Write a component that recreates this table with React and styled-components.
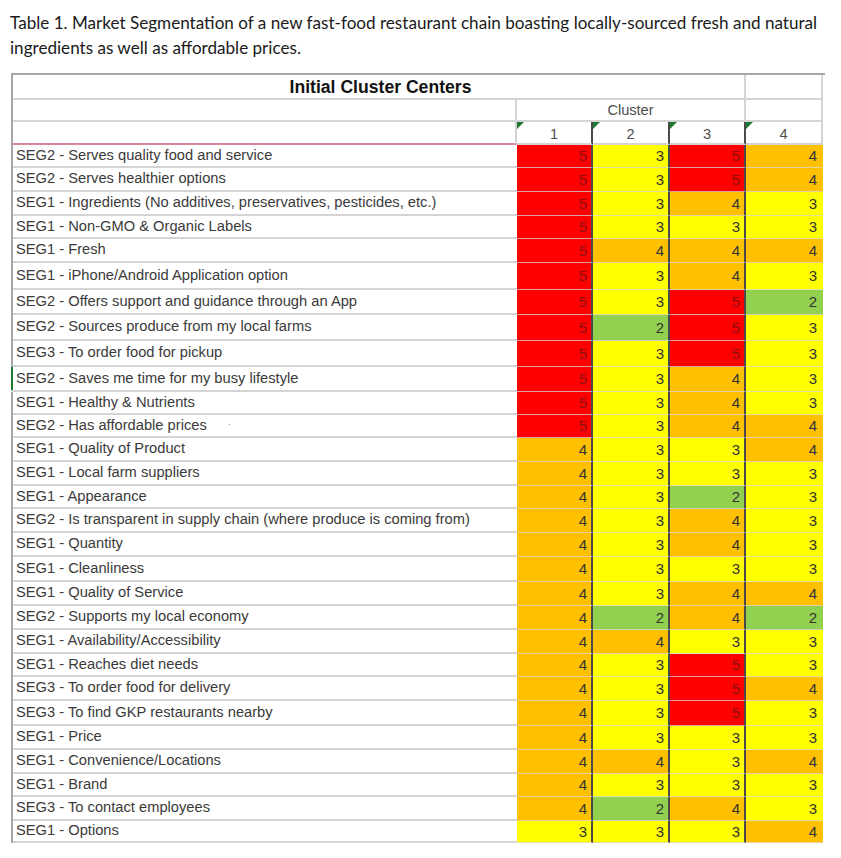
import React from "react";
import styled, { createGlobalStyle } from "styled-components";

const GlobalStyle = createGlobalStyle`
  body {
    margin: 0;
    background: #fff;
  }
`;

const COLS = "504px 76px 77px 76px 77px";

const FILLS = {
  5: "#ff0000",
  4: "#ffc000",
  3: "#ffff00",
  2: "#92d050",
};

const ROWS = [
  ["SEG2 - Serves quality food and service", [5, 3, 5, 4], 23],
  ["SEG2 - Serves healthier options", [5, 3, 5, 4], 24],
  ["SEG1 - Ingredients (No additives, preservatives, pesticides, etc.)", [5, 3, 4, 3], 24],
  ["SEG1 - Non-GMO & Organic Labels", [5, 3, 3, 3], 23],
  ["SEG1 - Fresh", [5, 4, 4, 4], 24],
  ["SEG1 - iPhone/Android Application option", [5, 3, 4, 3], 27],
  ["SEG2 - Offers support and guidance through an App", [5, 3, 5, 2], 25],
  ["SEG2 - Sources produce from my local farms", [5, 2, 5, 3], 26],
  ["SEG3 - To order food for pickup", [5, 3, 5, 3], 26],
  ["SEG2 - Saves me time for my busy lifestyle", [5, 3, 4, 3], 25, true],
  ["SEG1 - Healthy & Nutrients", [5, 3, 4, 3], 23],
  ["SEG2 - Has affordable prices", [5, 3, 4, 4], 23, false, true],
  ["SEG1 - Quality of Product", [4, 3, 3, 4], 24],
  ["SEG1 - Local farm suppliers", [4, 3, 3, 3], 24],
  ["SEG1 - Appearance", [4, 3, 2, 3], 23],
  ["SEG2 - Is transparent in supply chain (where produce is coming from)", [4, 3, 4, 3], 24],
  ["SEG1 - Quantity", [4, 3, 4, 3], 24],
  ["SEG1 - Cleanliness", [4, 3, 3, 3], 25],
  ["SEG1 - Quality of Service", [4, 3, 4, 4], 24],
  ["SEG2 - Supports my local economy", [4, 2, 4, 2], 24],
  ["SEG1 - Availability/Accessibility", [4, 4, 3, 3], 24],
  ["SEG1 - Reaches diet needs", [4, 3, 5, 3], 23],
  ["SEG3 - To order food for delivery", [4, 3, 5, 4], 24],
  ["SEG3 - To find GKP restaurants nearby", [4, 3, 5, 3], 25],
  ["SEG1 - Price", [4, 3, 3, 3], 24],
  ["SEG1 - Convenience/Locations", [4, 4, 3, 4], 24],
  ["SEG1 - Brand", [4, 3, 3, 3], 23],
  ["SEG3 - To contact employees", [4, 2, 4, 3], 24],
  ["SEG1 - Options", [3, 3, 3, 4], 22],
];

const Page = styled.div`
  width: 841px;
  padding-bottom: 14px;
`;

const Caption = styled.p`
  margin: 0;
  padding: 10px 10px 0 10px;
  font-family: "Lato", "Open Sans", sans-serif;
  font-size: 17.1px;
  line-height: 25px;
  color: #1a1a1a;
`;

const Sheet = styled.div`
  margin: 13px 0 0 11px;
  width: 812px;
  border-left: 2px solid #a6a6a6;
  border-top: 2px solid #a6a6a6;
  font-family: "Liberation Sans", Arial, sans-serif;
`;

const Row = styled.div`
  display: grid;
  grid-template-columns: ${COLS};
  height: ${(p) => p.$h}px;
`;

const HeadCell = styled.div`
  position: relative;
  box-sizing: border-box;
  grid-column: ${(p) => p.$span || "auto"};
  display: flex;
  align-items: center;
  justify-content: center;
  padding-top: 2px;
  border-bottom: 2px solid ${(p) => (p.$accent ? "#d98a96" : "#d4d4d4")};
  border-right: 2px solid ${(p) => (p.$dark ? "#4a4a4a" : p.$line ? "#d4d4d4" : "transparent")};
  color: #4d4d4d;
  font-size: 14.6px;
`;

const Title = styled(HeadCell)`
  font-size: 17.6px;
  font-weight: bold;
  color: #111;
  padding-left: 4px;
`;

const Flag = styled.span`
  position: absolute;
  top: 0;
  left: 0;
  width: 0;
  height: 0;
  border-top: 7px solid #1e7a30;
  border-right: 7px solid transparent;
`;

const Label = styled.div`
  box-sizing: border-box;
  display: flex;
  align-items: center;
  padding-bottom: 2px;
  border-bottom: 2px solid #d4d4d4;
  box-shadow: ${(p) => (p.$mark ? "inset 2px 0 0 #1e7a30" : "none")};
  margin-left: ${(p) => (p.$mark ? "-2px" : "0")};
  padding-left: ${(p) => (p.$mark ? "5px" : "3px")};
  color: #3a3a3a;
  font-size: 14.7px;
  white-space: nowrap;
`;

const Dot = styled.span`
  margin-left: 21px;
  color: #9a9a9a;
  font-size: 10px;
`;

const Score = styled.div`
  box-sizing: border-box;
  display: flex;
  align-items: center;
  justify-content: flex-end;
  padding: 0 4px 1px 0;
  background: ${(p) => FILLS[p.$v]};
  border-bottom: 1px solid rgba(215, 215, 215, 0.75);
  border-right: 2px solid ${(p) => (p.$last ? "transparent" : "#4a4a4a")};
  color: ${(p) => (p.$v === 5 ? "#8a1010" : "#333")};
  font-size: 15px;
`;

export default function App() {
  return (
    <Page>
      <GlobalStyle />
      <Caption>
        Table 1. Market Segmentation of a new fast-food restaurant chain boasting locally-sourced fresh and natural
        ingredients as well as affordable prices.
      </Caption>

      <Sheet>
        <Row $h={23}>
          <Title $span="1 / 5" $line>Initial Cluster Centers</Title>
          <HeadCell $line />
        </Row>
        <Row $h={24}>
          <HeadCell $line />
          <HeadCell $span="2 / 5" $line>Cluster</HeadCell>
          <HeadCell $line />
        </Row>
        <Row $h={23}>
          <HeadCell $accent $line />
          {[1, 2, 3, 4].map((n) => (
            <HeadCell key={n} $dark={n < 4} $line={n === 4}>
              <Flag />
              {n}
            </HeadCell>
          ))}
        </Row>

        {ROWS.map(([label, vals, h, mark, dot]) => (
          <Row key={label} $h={h}>
            <Label $mark={mark}>
              {label}
              {dot && <Dot>·</Dot>}
            </Label>
            {vals.map((v, i) => (
              <Score key={i} $v={v} $last={i === 3}>
                {v}
              </Score>
            ))}
          </Row>
        ))}
      </Sheet>
    </Page>
  );
}
